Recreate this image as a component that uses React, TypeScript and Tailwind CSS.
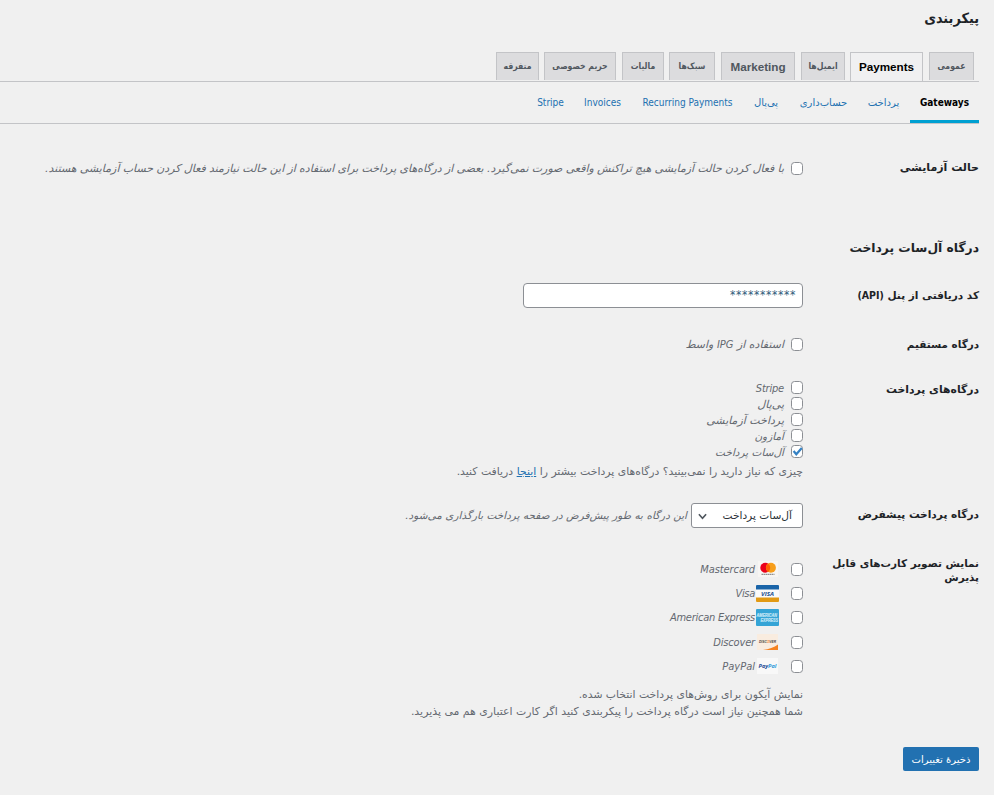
import type { ReactNode } from 'react';

const wide = "font-['DejaVu_Sans',sans-serif]";
const cond = "font-['DejaVu_Sans_Condensed','DejaVu_Sans',sans-serif] [font-stretch:condensed]";

const arabicTab = "text-[8.6px] font-['DejaVu_Sans_Condensed','DejaVu_Sans',sans-serif] [font-stretch:condensed]";
const latinTab = "text-[11.7px] font-['Liberation_Sans',sans-serif]";

const tabs = [
  { label: 'عمومی', box: 'w-[45px] h-[28px] ml-px', font: arabicTab, active: false },
  { label: 'Payments', box: 'w-[73px] h-[29px]', font: latinTab, active: true },
  { label: 'ایمیل‌ها', box: 'w-[44px] h-[28px] ml-px', font: arabicTab, active: false },
  { label: 'Marketing', box: 'w-[74px] h-[28px] ml-px', font: latinTab, active: false },
  { label: 'سبک‌ها', box: 'w-[46px] h-[28px]', font: arabicTab, active: false },
  { label: 'مالیات', box: 'w-[42px] h-[28px] ml-px', font: arabicTab, active: false },
  { label: 'حریم خصوصی', box: 'w-[72px] h-[28px]', font: arabicTab, active: false },
  { label: 'متفرقه', box: 'w-[43px] h-[28px]', font: arabicTab, active: false },
];

const sections = [
  { label: 'پرداخت', box: "w-[31px] ml-[20px] font-['DejaVu_Sans',sans-serif] [font-stretch:normal]" },
  { label: 'حساب‌داری', box: "w-[49px] ml-[20px] font-['DejaVu_Sans',sans-serif] [font-stretch:normal]" },
  { label: 'پی‌پال', box: "w-[26px] ml-[20px] font-['DejaVu_Sans',sans-serif] [font-stretch:normal]" },
  { label: 'Recurring Payments', box: 'w-[91px] ml-[20px]' },
  { label: 'Invoices', box: 'w-[39px] ml-[19px]' },
  { label: 'Stripe', box: 'w-[27px]' },
];

const gateways = [
  { label: 'Stripe', font: "font-['DejaVu_Sans_Condensed','DejaVu_Sans',sans-serif] [font-stretch:condensed] tracking-[-0.2px]", checked: false },
  { label: 'پی‌پال', font: '', checked: false },
  { label: 'پرداخت آزمایشی', font: '', checked: false },
  { label: 'آمازون', font: 'text-[10.5px]', checked: false },
  { label: 'آل‌سات پرداخت', font: 'text-[10.5px]', checked: true },
];

function Check({ checked = false, className = '' }: { checked?: boolean; className?: string }) {
  return (
    <span className={`flex h-[13px] w-[12px] shrink-0 items-center justify-center rounded-[3.5px] border border-[#8c8f94] bg-white ${className}`}>
      {checked && (
        <svg viewBox="0 0 12 12" className="h-3 w-3 shrink-0">
          <path d="M2.600 6 5.300 9.300 10.800 3" fill="none" stroke="#3582c4" strokeWidth="2.200" />
        </svg>
      )}
    </span>
  );
}

function Row({ label, h, pad, children }: { label: ReactNode; h: string; pad: string; children: ReactNode }) {
  return (
    <div className={`flex ${h}`}>
      <div className={`w-[176px] shrink-0 whitespace-nowrap leading-[14px] font-bold text-[#1d2327] ${pad}`}>{label}</div>
      <div className="min-w-0 flex-1">{children}</div>
    </div>
  );
}

function Mastercard() {
  return (
    <svg viewBox="0 0 20 16" className="h-4 w-5">
      <rect width="20" height="16" fill="#f7f5f3" />
      <circle cx="7.300" cy="6.800" r="5" fill="#eb001b" />
      <circle cx="12.900" cy="6.800" r="5" fill="#f79e1b" />
      <path d="M10.100 2.700a5 5 0 0 1 0 8.200 5 5 0 0 1 0-8.200" fill="#ff5f00" />
      <path d="M3.500 13.300h13" stroke="#777" strokeWidth="1" strokeDasharray="1.600 .4" />
    </svg>
  );
}

function Visa() {
  return (
    <svg viewBox="0 0 23 17" className="h-[17px] w-[23px] [direction:ltr]">
      <rect width="23" height="17" rx="1" fill="#fafafa" />
      <path d="M0 4.500V1a1 1 0 0 1 1-1h21a1 1 0 0 1 1 1v3.500z" fill="#1a64a8" />
      <path d="M0 12.500v3.500a1 1 0 0 0 1 1h21a1 1 0 0 0 1-1v-3.500z" fill="#e29a14" />
      <text x="5" y="10.800" fontSize="6" fontWeight="bold" fontStyle="italic" textLength="13" lengthAdjust="spacingAndGlyphs" fontFamily="Open Sans, sans-serif" fill="#1a4f8f">VISA</text>
    </svg>
  );
}

function Amex() {
  return (
    <svg viewBox="0 0 23 17" className="h-[17px] w-[23px] [direction:ltr]">
      <rect width="23" height="17" rx="1" fill="#35a4d6" />
      <g fill="#b4dff2" stroke="#d5eef9" strokeWidth=".2" fontFamily="Liberation Sans, sans-serif" fontWeight="bold" fontSize="4.600">
        <text x="0.500" y="8" textLength="20.500" lengthAdjust="spacingAndGlyphs">AMERICAN</text>
        <text x="4.500" y="12.800" textLength="17.500" lengthAdjust="spacingAndGlyphs">EXPRESS</text>
      </g>
    </svg>
  );
}

function Discover() {
  return (
    <svg viewBox="0 0 21 16" className="h-4 w-[21px] [direction:ltr]">
      <rect width="21" height="16" fill="#f9ecdf" />
      <path d="M6 16c6-.8 11-2.500 15-5.500V16z" fill="#f58220" />
      <text x="2" y="9.300" fontSize="4.200" fontWeight="bold" textLength="17" lengthAdjust="spacingAndGlyphs" fontFamily="Liberation Sans, sans-serif" fill="#4a4340">
        DISC<tspan fill="#f58220">O</tspan>VER
      </text>
    </svg>
  );
}

function PayPal() {
  return (
    <svg viewBox="0 0 21 16" className="h-4 w-[21px] [direction:ltr]">
      <rect width="21" height="16" fill="#f8f8f8" />
      <text x="1.500" y="9.800" fontSize="5.800" fontWeight="bold" fontStyle="italic" textLength="18" lengthAdjust="spacingAndGlyphs" fontFamily="Open Sans, sans-serif" fill="#1f4a94">
        Pay<tspan fill="#2d9ad8">Pal</tspan>
      </text>
    </svg>
  );
}

const cards = [
  { label: 'Mastercard', tracking: 'tracking-[-0.1px]', art: <Mastercard /> },
  { label: 'Visa', tracking: 'tracking-[-0.3px]', art: <Visa /> },
  { label: 'American Express', tracking: 'tracking-[-0.25px]', art: <Amex /> },
  { label: 'Discover', tracking: 'tracking-[-0.15px]', art: <Discover /> },
  { label: 'PayPal', tracking: '', art: <PayPal /> },
];

export default function App() {
  return (
    <div dir="rtl" className={`h-[795px] w-[994px] overflow-hidden bg-[#f0f0f0] pr-[15px] text-[11px] text-[#646970] ${wide}`}>
      <h1 className={`h-[52px] pt-[7px] text-[14.3px] leading-[22px] font-bold text-[#1d2327] ${cond}`}>پیکربندی</h1>

      <nav className="flex h-[30px] items-start gap-[5px] border-b border-[#c3c4c7] pr-[5px]">
        {tabs.map((t) => (
          <a
            key={t.label}
            className={`flex shrink-0 items-center justify-center whitespace-nowrap border border-b-0 border-[#c3c4c7] font-bold ${t.font} ${t.box} ${t.active ? 'bg-[#f0f0f1] text-black' : 'bg-[#dcdcde] text-[#50575e]'}`}
          >
            {t.label}
          </a>
        ))}
      </nav>

      <nav className={`flex h-[42px] border-b border-[#c3c4c7] text-[10px] whitespace-nowrap text-[#2271b1] ${cond}`}>
        <a className="ml-[11px] flex h-[41px] w-[69px] items-center justify-center border-b-[3px] border-[#00a0d2] pt-[3px] font-bold text-black">Gateways</a>
        {sections.map((s) => (
          <a key={s.label} className={`flex h-[41px] items-center justify-center ${s.box}`}>{s.label}</a>
        ))}
      </nav>

      <Row label="حالت آزمایشی" h="h-[115px] pt-[36px]" pad="pt-[1px]">
        <div className="flex items-center gap-[7px] whitespace-nowrap italic">
          <Check />
          <span className="pt-px [word-spacing:-0.26px]">با فعال کردن حالت آزمایشی هیچ تراکنش واقعی صورت نمی‌گیرد. بعضی از درگاه‌های پرداخت برای استفاده از این حالت نیازمند فعال کردن حساب آزمایشی هستند.</span>
        </div>
      </Row>

      <h2 className="h-[44px] text-[12.3px] leading-[18px] font-bold text-[#1d2327]">درگاه آل‌سات پرداخت</h2>

      <Row label={<>کد دریافتی از پنل <span className={cond}>(API)</span></>} h="h-[55px]" pad="pt-[5px] text-[10.5px]">
        <div className="flex h-[25px] w-[280px] items-center rounded-[4px] border border-[#8c8f94] bg-white px-[6px] pb-px font-['DejaVu_Sans_Condensed','DejaVu_Sans',sans-serif] text-[12px] tracking-[0.6px] text-[#2c5a78]">***********</div>
      </Row>

      <Row label="درگاه مستقیم" h="h-[43px]" pad="-mt-px text-[10.4px]">
        <div className="flex items-center gap-[7px] italic">
          <Check className="relative -top-[2px]" />
          <span className="relative -top-px">استفاده از <span className={cond}>IPG</span> واسط</span>
        </div>
      </Row>

      <Row label="درگاه‌های پرداخت" h="h-[122px]" pad="pt-[2px] text-[10.8px]">
        {gateways.map((g) => (
          <div key={g.label} className="flex h-4 items-center gap-[7px] italic">
            <Check checked={g.checked} className="relative -top-[2px]" />
            <span className={g.font}>{g.label}</span>
          </div>
        ))}
        <p className="whitespace-nowrap pt-[3px] text-[10.85px] leading-[16px]">
          چیزی که نیاز دارید را نمی‌بینید؟ درگاه‌های پرداخت بیشتر را <a className="text-[#2271b1] underline">اینجا</a> دریافت کنید.
        </p>
      </Row>

      <Row label="درگاه پرداخت پیشفرض" h="h-[54px]" pad="pt-[4px] text-[10.6px]">
        <div className="flex items-center gap-[4px] whitespace-nowrap">
          <div className="flex h-[25px] w-[112px] items-center justify-between rounded-[3px] border border-[#8c8f94] bg-white pt-px pr-[10px] pl-[6px] text-[10.6px] text-[#2c3338]">
            آل‌سات پرداخت
            <svg viewBox="0 0 10 10" className="h-[9px] w-[9px]">
              <path d="M1 2.500 5 7l4-4.500" fill="none" stroke="#50575e" strokeWidth="1.800" />
            </svg>
          </div>
          <span className="text-[10.5px] italic">این درگاه به طور پیش‌فرض در صفحه پرداخت بارگذاری می‌شود.</span>
        </div>
      </Row>

      <Row label={<>نمایش تصویر کارت‌های قابل<br />پذیرش</>} h="h-[190px]" pad="-mt-px text-[10.45px]">
        {cards.map((c) => (
          <div key={c.label} className="flex h-[24.300px] items-center italic">
            <Check />
            <span className="mr-[12px] ml-px flex w-[23px] justify-center">{c.art}</span>
            <span className={`pt-[2px] ${cond} ${c.tracking}`}>{c.label}</span>
          </div>
        ))}
        <p className="whitespace-nowrap pt-[8px] text-[10.92px] leading-[17px]">
          <span className="text-[10.8px]">نمایش آیکون برای روش‌های پرداخت انتخاب شده.</span><br />
          شما همچنین نیاز است درگاه پرداخت را پیکربندی کنید اگر کارت اعتباری هم می پذیرید.
        </p>
      </Row>

      <button className="flex h-6 w-[76px] items-center justify-center rounded-[2px] bg-[#2271b1] text-[10px] whitespace-nowrap text-white">ذخیرهٔ تغییرات</button>
    </div>
  );
}
